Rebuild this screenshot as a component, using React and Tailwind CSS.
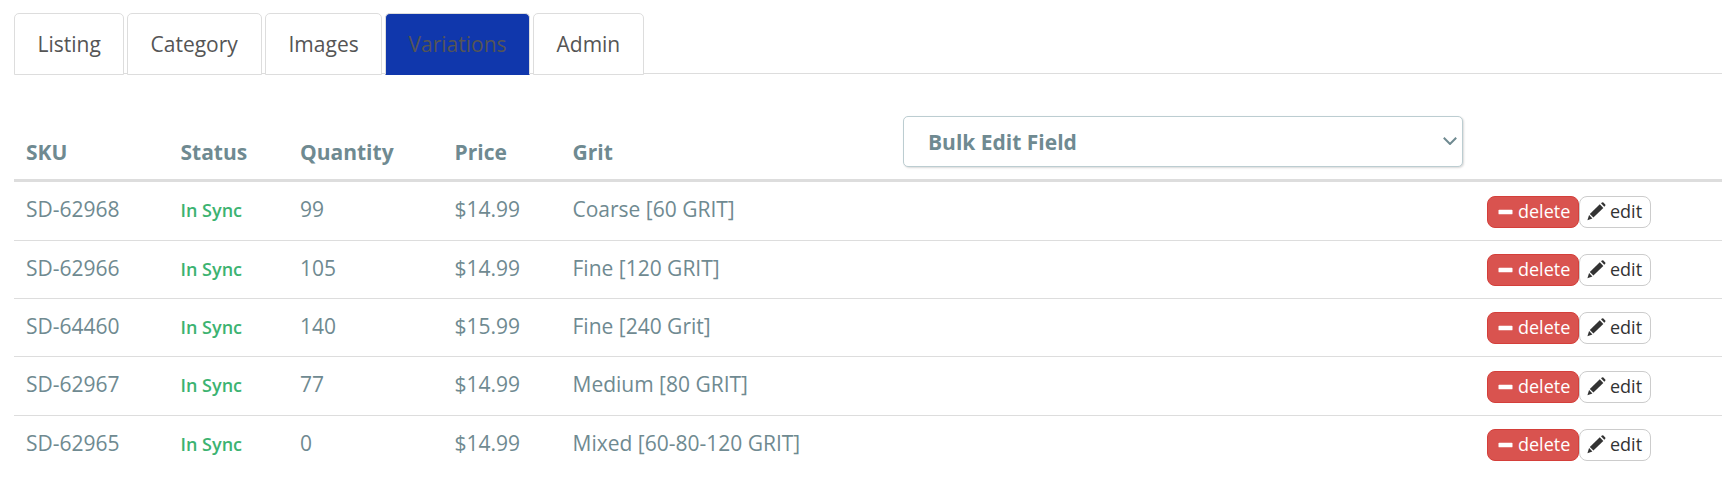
const tabs = [
  { label: 'Listing', size: 'w-[110px] mr-[3px]' },
  { label: 'Category', size: 'w-[135px] mr-[3px]' },
  { label: 'Images', size: 'w-[117px] mr-[3px]' },
  { label: 'Variations', size: 'w-[145px] mr-[3px]', active: true },
  { label: 'Admin', size: 'w-[111px]' },
];

const rows = [
  { sku: 'SD-62968', qty: '99', price: '$14.99', grit: 'Coarse [60 GRIT]', height: 'h-[59px] border-b', actions: 'pt-3.5' },
  { sku: 'SD-62966', qty: '105', price: '$14.99', grit: 'Fine [120 GRIT]', height: 'h-[58px] border-b', actions: 'pt-[13px]' },
  { sku: 'SD-64460', qty: '140', price: '$15.99', grit: 'Fine [240 Grit]', height: 'h-[58px] border-b', actions: 'pt-[13px]' },
  { sku: 'SD-62967', qty: '77', price: '$14.99', grit: 'Medium [80 GRIT]', height: 'h-[59px] border-b', actions: 'pt-3.5' },
  { sku: 'SD-62965', qty: '0', price: '$14.99', grit: 'Mixed [60-80-120 GRIT]', height: 'h-[58px]', actions: 'pt-[13px]' },
];

const columns = 'grid grid-cols-[154.5px_119.5px_154.5px_118px_330px_584.5px_1fr] pl-3';

function Minus() {
  return (
    <svg className="h-[18px] w-[15px] shrink-0" viewBox="0 0 15 18">
      <rect x="0.5" y="6.7" width="14" height="4.6" rx="0.9" fill="#fff" />
    </svg>
  );
}

function Pencil() {
  return (
    <svg className="h-[19px] w-[19px] shrink-0" viewBox="0 0 19 19" fill="#333">
      <path d="M14 1.2 15 .4q.7-.5 1.4.1l1.8 1.9q.6.7 0 1.4l-.9 1z" />
      <path d="M12.8 2.3 16.3 5.9 6.4 15.6 2.8 12z" />
      <path d="M2.1 13 5.4 16.4.4 18.2z" />
    </svg>
  );
}

export default function App() {
  return (
    <main className="h-[496px] w-full overflow-hidden bg-white px-3.5 pt-[13px] font-['Open_Sans',sans-serif] text-[21px] leading-[30px] text-[#6f8a91]">
      <nav className="flex h-[61px] border-b border-[#ddd]">
        {tabs.map((t) => (
          <button
            key={t.label}
            className={`${t.size} h-[62px] shrink-0 rounded-t-[5px] border px-[22.5px] text-left text-[#555] ${
              t.active ? 'border-[#ddd] border-b-[#1037ac] bg-[#1037ac]' : 'border-[#ddd] bg-white'
            }`}
          >
            {t.label}
          </button>
        ))}
      </nav>
      <section className="mt-[42px]">
        <header className={`${columns} h-[66px] border-b-3 border-[#ddd] font-bold`}>
          <span className="pt-[21px]">SKU</span>
          <span className="pt-[21px]">Status</span>
          <span className="pt-[21px]">Quantity</span>
          <span className="pt-[21px]">Price</span>
          <span className="pt-[21px]">Grit</span>
          <button className="ml-[0.5px] flex h-[51px] w-[560px] items-center justify-between rounded-[5px] border border-[#bccdd1] bg-white pr-[5px] pl-6 text-left shadow-[1px_1px_2px_rgba(0,0,0,0.15)]">
            <span>Bulk Edit Field</span>
            <svg className="-mt-0.5 h-2 w-3.5" viewBox="0 0 14 8" fill="none" stroke="#6f8a91" strokeWidth="2">
              <path d="M.8.8 7 7 13.2.8" />
            </svg>
          </button>
        </header>
        {rows.map((r) => (
          <div key={r.sku} className={`${columns} ${r.height} border-[#ddd]`}>
            <span className="pt-3">{r.sku}</span>
            <span className="pt-[13px] text-[18px] font-semibold text-[#3cb371]">In Sync</span>
            <span className="pt-3">{r.qty}</span>
            <span className="pt-3">{r.price}</span>
            <span className="pt-3">{r.grit}</span>
            <span />
            <div className={`flex ${r.actions}`}>
              <button className="flex h-8 w-[92px] items-center gap-[5px] rounded-[8px] border border-[#d43f3a] bg-[#d9534f] pl-2.5 text-[18px] text-white">
                <Minus />
                <span className="pb-0.5">delete</span>
              </button>
              <button className="flex h-8 w-[72px] items-center gap-1 rounded-[8px] border border-[#ccc] bg-white pl-[7px] text-[18px] text-[#333]">
                <span className="pb-0.5">
                  <Pencil />
                </span>
                <span className="pb-0.5">edit</span>
              </button>
            </div>
          </div>
        ))}
      </section>
    </main>
  );
}
